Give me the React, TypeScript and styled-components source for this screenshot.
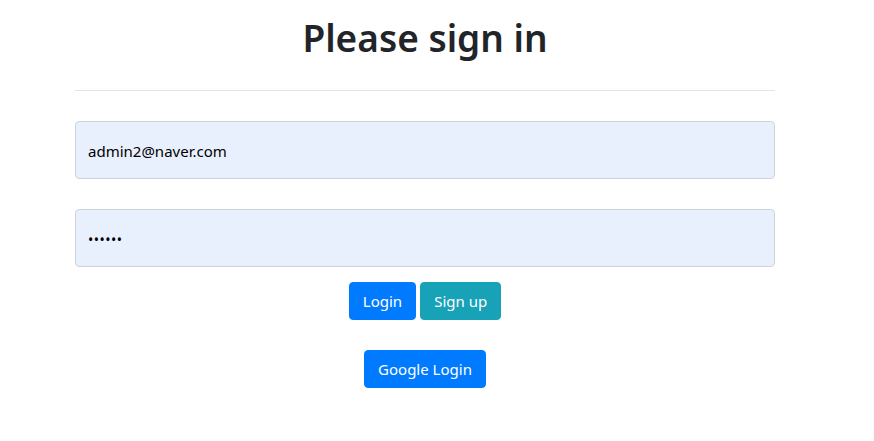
import * as React from 'react';
import styled, { createGlobalStyle } from 'styled-components';

const GlobalStyle = createGlobalStyle`
  html, body {
    margin: 0;
    padding: 0;
    background: #ffffff;
  }
  body {
    font-family: "Noto Sans", "Open Sans", "Liberation Sans", sans-serif;
    color: #212529;
  }
`;

export default function App(): JSX.Element {
  return (
    <>
      <GlobalStyle />
      <Container>
        <Title>Please sign in</Title>
        <Divider />
        <Form onSubmit={(e) => e.preventDefault()}>
          <Field type="email" defaultValue="admin2@naver.com" />
          <Field type="password" defaultValue="123456" />
          <ButtonRow>
            <Button type="submit">Login</Button>
            <Button type="button" variant="info">
              Sign up
            </Button>
          </ButtonRow>
          <ButtonRow spaced>
            <Button type="button">Google Login</Button>
          </ButtonRow>
        </Form>
      </Container>
    </>
  );
}

const Container = styled.div`
  width: 700px;
  margin-left: 75px;
  padding-top: 14px;
`;

const Title = styled.h1`
  margin: 0;
  text-align: center;
  font-size: 37px;
  font-weight: 600;
  line-height: 48px;
  color: #212529;
`;

const Divider = styled.hr`
  margin: 28px 0 0;
  border: 0;
  border-top: 1px solid #e1e4e8;
`;

const Form = styled.form`
  display: flex;
  flex-direction: column;
  padding-top: 30px;
`;

const Field = styled.input`
  box-sizing: border-box;
  height: 58px;
  width: 100%;
  margin-bottom: 30px;
  padding: 2px 12px 0;
  font-family: "Noto Sans", "Open Sans", sans-serif;
  font-size: 15px;
  color: #000;
  background: #e8f0fe;
  border: 1px solid #ced4da;
  border-radius: 4px;
  outline: none;

  &[type='password'] {
    margin-bottom: 15px;
    font-size: 14px;
    letter-spacing: 0.5px;
  }
`;

const ButtonRow = styled.div<{ spaced?: boolean }>`
  display: flex;
  justify-content: center;
  gap: 4px;
  margin-top: ${(p) => (p.spaced ? '30px' : '0')};
`;

const Button = styled.button<{ variant?: 'primary' | 'info' }>`
  box-sizing: border-box;
  height: 38px;
  padding: 0 13px;
  font-family: "Noto Sans", "Open Sans", sans-serif;
  font-size: 15px;
  color: #fff;
  background: ${(p) => (p.variant === 'info' ? '#17a2b8' : '#007bff')};
  border: 1px solid ${(p) => (p.variant === 'info' ? '#17a2b8' : '#007bff')};
  border-radius: 4px;
  cursor: pointer;
`;
